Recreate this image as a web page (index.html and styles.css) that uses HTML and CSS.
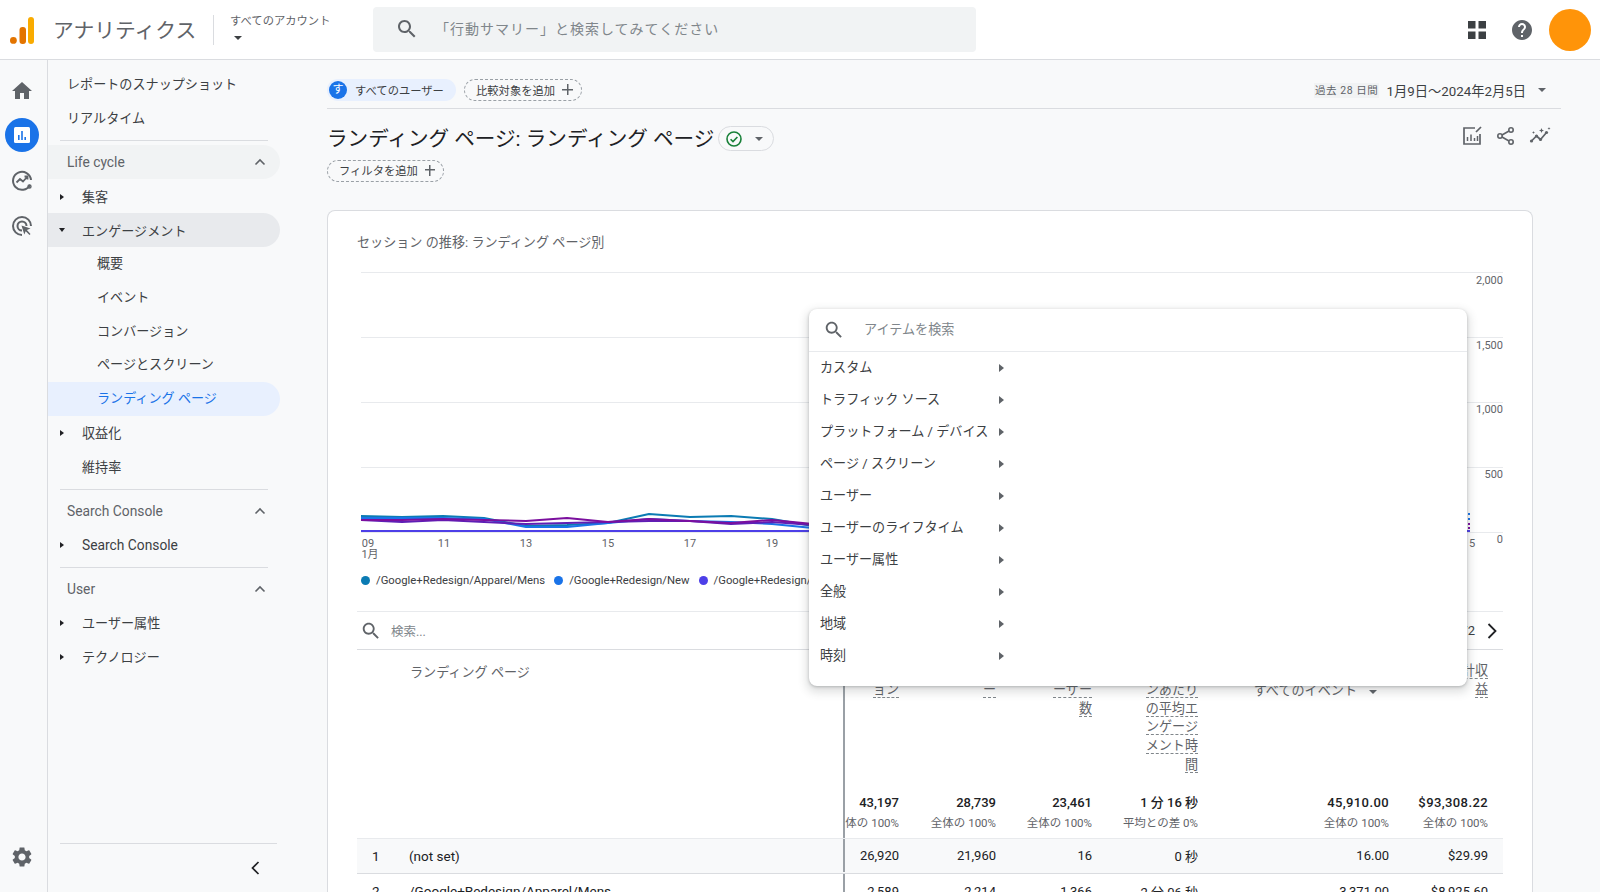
FILE: index.html
```html
<!DOCTYPE html>
<html lang="ja">
<head>
<meta charset="utf-8">
<title>アナリティクス</title>
<link rel="stylesheet" href="styles.css">
</head>
<body>
<header class="topbar">
  <svg class="ga-logo" width="24" height="28" viewBox="0 0 24 28"><circle cx="3.4" cy="23.4" r="3.4" fill="#e37400"/><rect x="9.5" y="10" width="6.5" height="17" rx="3" fill="#e37400"/><rect x="18" y="0" width="6" height="27" rx="3" fill="#f9ab00"/></svg>
  <div class="product">アナリティクス</div>
  <div class="account">
    <div class="account-label">すべてのアカウント</div>
    <span class="caret account-caret"></span>
  </div>
  <div class="searchbox">
    <svg class="icon-search" width="24" height="24" viewBox="0 0 24 24"><path d="M15.5 14h-.79l-.28-.27C15.41 12.59 16 11.11 16 9.5 16 5.91 13.09 3 9.5 3S3 5.91 3 9.5 5.91 16 9.5 16c1.61 0 3.09-.59 4.23-1.57l.27.28v.79l5 4.99L20.49 19l-4.99-5zm-6 0C7.01 14 5 11.99 5 9.5S7.01 5 9.5 5 14 7.01 14 9.5 11.99 14 9.5 14z"/></svg>
    <span class="searchbox-text">「行動サマリー」と検索してみてください</span>
  </div>
  <div class="top-actions">
    <svg width="18" height="18" viewBox="0 0 18 18" fill="#3c4043"><rect width="7.5" height="7.5"/><rect x="10.5" width="7.5" height="7.5"/><rect y="10.5" width="7.5" height="7.5"/><rect x="10.5" y="10.5" width="7.5" height="7.5"/></svg>
    <svg class="help" width="24" height="24" viewBox="0 0 24 24" fill="#5f6368"><path d="M12 2C6.48 2 2 6.48 2 12s4.48 10 10 10 10-4.48 10-10S17.52 2 12 2zm1 17h-2v-2h2v2zm2.07-7.75l-.9.92C13.45 12.9 13 13.5 13 15h-2v-.5c0-1.1.45-2.1 1.17-2.83l1.24-1.26c.37-.36.59-.86.59-1.41 0-1.1-.9-2-2-2s-2 .9-2 2H8c0-2.21 1.79-4 4-4s4 1.79 4 4c0 .88-.36 1.68-.93 2.25z"/></svg>
    <div class="avatar"></div>
  </div>
</header>

<div class="shell">
  <nav class="rail">
    <div class="rail-item"><svg width="24" height="24" viewBox="0 0 24 24" fill="#5f6368"><path d="M10 20v-6h4v6h5v-8h3L12 3 2 12h3v8z"/></svg></div>
    <div class="rail-item rail-active"><svg width="18" height="18" viewBox="0 0 18 18"><rect x="1" y="1" width="16" height="16" rx="1.5" fill="#fff"/><rect x="5" y="9" width="1.6" height="5" fill="#1a73e8"/><rect x="8.2" y="5" width="1.6" height="9" fill="#1a73e8"/><rect x="11.4" y="11" width="1.6" height="3" fill="#1a73e8"/></svg></div>
    <div class="rail-item"><svg width="24" height="24" viewBox="0 0 24 24" fill="none" stroke="#5f6368" stroke-width="2"><path d="M20 17A9 9 0 1 1 21 12"/><path d="M6.5 14.5l3.5-3.5 3 2.5 4.5-5M14.5 8.5h3v3" stroke-width="1.8"/><circle cx="19.5" cy="18.5" r="1.5" stroke-width="1.4"/></svg></div>
    <div class="rail-item"><svg width="24" height="24" viewBox="0 0 24 24" fill="none" stroke="#5f6368" stroke-width="2"><path d="M12 21a9 9 0 1 1 9-9"/><path d="M12 16.5A4.5 4.5 0 1 1 16.5 12"/><path d="M11.5 11.5l9 3-3.6 1.6 3.6 3.9-1 1-3.8-3.8-1.4 3.2z" fill="#5f6368" stroke="none"/></svg></div>
    <div class="rail-item rail-gear"><svg width="24" height="24" viewBox="0 0 24 24" fill="#5f6368"><path d="M19.14 12.94c.04-.3.06-.61.06-.94 0-.32-.02-.64-.07-.94l2.03-1.58c.18-.14.23-.41.12-.61l-1.92-3.32c-.12-.22-.37-.29-.59-.22l-2.39.96c-.5-.38-1.03-.7-1.62-.94l-.36-2.54c-.04-.24-.24-.41-.48-.41h-3.84c-.24 0-.43.17-.47.41l-.36 2.54c-.59.24-1.13.57-1.62.94l-2.39-.96c-.22-.08-.47 0-.59.22L2.74 8.87c-.12.21-.08.47.12.61l2.03 1.58c-.05.3-.09.63-.09.94s.02.64.07.94l-2.03 1.58c-.18.14-.23.41-.12.61l1.92 3.32c.12.22.37.29.59.22l2.39-.96c.5.38 1.03.7 1.62.94l.36 2.54c.05.24.24.41.48.41h3.84c.24 0 .44-.17.47-.41l.36-2.54c.59-.24 1.13-.56 1.62-.94l2.39.96c.22.08.47 0 .59-.22l1.92-3.32c.12-.22.07-.47-.12-.61l-2.01-1.58zM12 15.6c-1.98 0-3.6-1.62-3.6-3.6s1.62-3.6 3.6-3.6 3.6 1.62 3.6 3.6-1.62 3.6-3.6 3.6z"/></svg></div>
  </nav>

  <aside class="sidebar">
    <div class="nav-top">レポートのスナップショット</div>
    <div class="nav-top">リアルタイム</div>
    <div class="nav-rule"></div>
    <div class="nav-group nav-group-on">Life cycle<svg class="chev" width="12" height="8" viewBox="0 0 12 8" fill="none" stroke="#5f6368" stroke-width="1.6"><path d="M1.5 6.5L6 2l4.5 4.5"/></svg></div>
    <div class="nav-item"><span class="tri-right"></span>集客</div>
    <div class="nav-item nav-item-open"><span class="tri-down"></span>エンゲージメント</div>
    <div class="nav-sub">概要</div>
    <div class="nav-sub">イベント</div>
    <div class="nav-sub">コンバージョン</div>
    <div class="nav-sub">ページとスクリーン</div>
    <div class="nav-sub nav-sub-active">ランディング ページ</div>
    <div class="nav-item"><span class="tri-right"></span>収益化</div>
    <div class="nav-item nav-plain">維持率</div>
    <div class="nav-rule nav-rule-b"></div>
    <div class="nav-group">Search Console<svg class="chev" width="12" height="8" viewBox="0 0 12 8" fill="none" stroke="#5f6368" stroke-width="1.6"><path d="M1.5 6.5L6 2l4.5 4.5"/></svg></div>
    <div class="nav-item"><span class="tri-right"></span><span class="nav-latin">Search Console</span></div>
    <div class="nav-rule nav-rule-c"></div>
    <div class="nav-group">User<svg class="chev" width="12" height="8" viewBox="0 0 12 8" fill="none" stroke="#5f6368" stroke-width="1.6"><path d="M1.5 6.5L6 2l4.5 4.5"/></svg></div>
    <div class="nav-item"><span class="tri-right"></span>ユーザー属性</div>
    <div class="nav-item"><span class="tri-right"></span>テクノロジー</div>
    <div class="nav-foot">
      <svg width="12" height="16" viewBox="0 0 12 16" fill="none" stroke="#202124" stroke-width="1.7"><path d="M9.5 2L3.5 8l6 6"/></svg>
    </div>
  </aside>

  <main class="main">
    <div class="filterbar">
      <div class="chip-user"><span class="chip-badge">す</span>すべてのユーザー</div>
      <div class="chip-dash">比較対象を追加<span class="plus"></span></div>
      <div class="daterange">
        <span class="date-tag">過去 28 日間</span>
        <span class="date-text">1月9日～2024年2月5日</span>
        <span class="caret"></span>
      </div>
    </div>
    <div class="titlebar">
      <h1 class="page-title">ランディング ページ: ランディング ページ</h1>
      <div class="status-chip">
        <svg width="18" height="18" viewBox="0 0 18 18" fill="none" stroke="#188038" stroke-width="1.6"><circle cx="9" cy="9" r="7"/><path d="M5.6 9.2l2.4 2.4 4.4-4.6"/></svg>
        <span class="caret"></span>
      </div>
      <div class="title-tools">
        <svg width="22" height="22" viewBox="0 0 22 22" fill="none" stroke="#5f6368" stroke-width="1.7"><path d="M14 3H3v16h16V9"/><path d="M6.5 16v-4M10 16V9.5M13.5 16v-3M16.5 16v-5" stroke-width="1.5"/><path d="M15 7l5-5" stroke-width="1.7"/></svg>
        <svg width="20" height="20" viewBox="0 0 20 20" fill="none" stroke="#5f6368" stroke-width="1.6"><circle cx="15" cy="4" r="2.2"/><circle cx="15" cy="16" r="2.2"/><circle cx="4" cy="10" r="2.2"/><path d="M6 9l7-4M6 11l7 4"/></svg>
        <svg width="22" height="20" viewBox="0 0 22 20" fill="#5f6368"><path d="M2.5 15l5-5 4 3.5 6-7" fill="none" stroke="#5f6368" stroke-width="1.7"/><circle cx="2.5" cy="15" r="1.6"/><circle cx="7.5" cy="10" r="1.6"/><circle cx="11.5" cy="13.5" r="1.6"/><circle cx="17.5" cy="6.5" r="1.6"/><path d="M12.5 2l.7 1.8 1.8.7-1.8.7-.7 1.8-.7-1.8-1.8-.7 1.8-.7zM4.5 5l.4 1.1 1.1.4-1.1.4-.4 1.1-.4-1.1-1.1-.4 1.1-.4zM20 1l.4 1.1 1.1.4-1.1.4-.4 1.1-.4-1.1-1.1-.4 1.1-.4z"/></svg>
      </div>
    </div>
    <div class="chip-dash chip-filter">フィルタを追加<span class="plus"></span></div>

    <section class="card">
      <div class="chart-title">セッション の推移: ランディング ページ別</div>
      <svg class="chart" width="1146" height="304" viewBox="357 262 1146 304">
        <g stroke="#e8eaed" stroke-width="1"><path d="M361 272.500H1503M361 337.500H1503M361 402.500H1503M361 467.500H1503M361 532.500H1503"/></g>
        <g fill="none" stroke-width="2" stroke-linejoin="round">
          <polyline stroke="#0b7bb3" points="361,516 402,517 443,516 484,518 526,526 567,525 608,523 649,514 690,517 731,516 772,519 813,526"/>
          <polyline stroke="#1a73e8" points="361,518 402,518 443,518 484,519 526,527 567,527 608,523 649,519 690,521 731,522 772,524 813,528"/>
          <polyline stroke="#5f1fb5" points="361,520 402,522 443,520 484,522 526,524 567,523 608,522 649,521 690,521 731,524 772,522 813,525"/>
          <polyline stroke="#7b0f9e" points="361,520 402,520 443,519 484,520 526,521 567,518 608,522 649,519 690,521 731,523 772,520 813,524"/>
          <polyline stroke="#4d3fe8" points="361,531 1470,531"/>
          <path d="M1469 513v2M1469 518v2" stroke="#1a73e8"/>
          <path d="M1469 523v2M1469 527v2" stroke="#7b0f9e"/>
        </g>
        <g class="axis-y" text-anchor="end">
          <text x="1503" y="284">2,000</text>
          <text x="1503" y="349">1,500</text>
          <text x="1503" y="413">1,000</text>
          <text x="1503" y="478">500</text>
          <text x="1503" y="543">0</text>
        </g>
        <g class="axis-x" text-anchor="middle">
          <text x="368" y="547">09</text>
          <text x="370" y="558">1月</text>
          <text x="444" y="547">11</text>
          <text x="526" y="547">13</text>
          <text x="608" y="547">15</text>
          <text x="690" y="547">17</text>
          <text x="772" y="547">19</text>
          <text x="1472" y="547">5</text>
        </g>
      </svg>
      <div class="legend">
        <span class="legend-item"><i class="dot dot-a"></i>/Google+Redesign/Apparel/Mens</span>
        <span class="legend-item"><i class="dot dot-b"></i>/Google+Redesign/New</span>
        <span class="legend-item"><i class="dot dot-c"></i>/Google+Redesign/Apparel/Mens/Tees</span>
      </div>
      <div class="table-search">
        <svg width="22" height="22" viewBox="0 0 24 24" fill="#5f6368"><path d="M15.5 14h-.79l-.28-.27C15.41 12.59 16 11.11 16 9.5 16 5.91 13.09 3 9.5 3S3 5.91 3 9.5 5.91 16 9.5 16c1.61 0 3.09-.59 4.23-1.57l.27.28v.79l5 4.99L20.49 19l-4.99-5zm-6 0C7.01 14 5 11.99 5 9.5S7.01 5 9.5 5 14 7.01 14 9.5 11.99 14 9.5 14z"/></svg>
        <span class="table-search-text">検索...</span>
        <span class="pager">
          <span>1/2</span>
          <svg width="12" height="18" viewBox="0 0 12 18" fill="none" stroke="#202124" stroke-width="1.8"><path d="M2.500 2l7 7-7 7"/></svg>
        </span>
      </div>

      <div class="trow thead">
        <div class="cell-dim head-dim">ランディング ページ</div>
        <div class="cell-num"><span class="dash">セッシ<br>ョン</span></div>
        <div class="cell-num"><span class="dash">ユーザ<br>ー</span></div>
        <div class="cell-num"><span class="dash">新しいユ<br>ーザー<br>数</span></div>
        <div class="cell-num"><span class="dash">セッショ<br>ンあたり<br>の平均エ<br>ンゲージ<br>メント時<br>間</span></div>
        <div class="cell-num">イベント数<br><span class="event-pick">すべてのイベント<span class="caret event-caret"></span></span></div>
        <div class="cell-num"><span class="dash">合計収<br>益</span></div>
      </div>
      <div class="trow totals">
        <div class="cell-dim"></div>
        <div class="cell-total"><b>43,197</b><small>全体の 100%</small></div>
        <div class="cell-total"><b>28,739</b><small>全体の 100%</small></div>
        <div class="cell-total"><b>23,461</b><small>全体の 100%</small></div>
        <div class="cell-total"><b>1 分 16 秒</b><small>平均との差 0%</small></div>
        <div class="cell-total"><b class="wide">45,910.00</b><small>全体の 100%</small></div>
        <div class="cell-total"><b class="wide">$93,308.22</b><small>全体の 100%</small></div>
      </div>
      <div class="trow data data-odd">
        <div class="cell-dim cell-row"><span class="rank">1</span>(not set)</div>
        <div class="cell-val">26,920</div>
        <div class="cell-val">21,960</div>
        <div class="cell-val">16</div>
        <div class="cell-val">0 秒</div>
        <div class="cell-val">16.00</div>
        <div class="cell-val">$29.99</div>
      </div>
      <div class="trow data">
        <div class="cell-dim cell-row"><span class="rank">2</span>/Google+Redesign/Apparel/Mens</div>
        <div class="cell-val">2,589</div>
        <div class="cell-val">2,214</div>
        <div class="cell-val">1,366</div>
        <div class="cell-val">2 分 06 秒</div>
        <div class="cell-val">3,371.00</div>
        <div class="cell-val">$8,925.60</div>
      </div>
    </section>
  </main>
</div>

<div class="dim-menu">
  <div class="menu-search">
    <svg width="22" height="22" viewBox="0 0 24 24" fill="#5f6368"><path d="M15.5 14h-.79l-.28-.27C15.41 12.59 16 11.11 16 9.5 16 5.91 13.09 3 9.5 3S3 5.91 3 9.5 5.91 16 9.5 16c1.61 0 3.09-.59 4.23-1.57l.27.28v.79l5 4.99L20.49 19l-4.99-5zm-6 0C7.01 14 5 11.99 5 9.5S7.01 5 9.5 5 14 7.01 14 9.5 11.99 14 9.5 14z"/></svg>
    <span>アイテムを検索</span>
  </div>
  <ul class="menu-list">
    <li>カスタム</li>
    <li>トラフィック ソース</li>
    <li>プラットフォーム / デバイス</li>
    <li>ページ / スクリーン</li>
    <li>ユーザー</li>
    <li>ユーザーのライフタイム</li>
    <li>ユーザー属性</li>
    <li>全般</li>
    <li>地域</li>
    <li>時刻</li>
  </ul>
</div>
</body>
</html>
```

FILE: styles.css
```css
* { box-sizing: border-box; }
html, body { height: 892px; }
body {
  margin: 0;
  overflow: hidden;
  background: #f8f9fa;
  color: #3c4043;
  font-family: Roboto, "Noto Sans CJK JP", sans-serif;
  font-size: 13.100px;
  position: relative;
}

.caret {
  display: inline-block;
  width: 0; height: 0;
  border-left: 4px solid transparent;
  border-right: 4px solid transparent;
  border-top: 4px solid #5f6368;
}

/* top bar */
.topbar {
  height: 60px;
  background: #fff;
  border-bottom: 1px solid #dadce0;
  display: flex;
  align-items: center;
}
.ga-logo { margin: 2px 0 0 10px; flex: none; }
.product {
  margin-left: 19px;
  width: 161px;
  height: 30px;
  line-height: 32px;
  font-size: 20.800px;
  color: #5f6368;
  border-right: 1px solid #dadce0;
  white-space: nowrap;
}
.account { width: 159px; padding-left: 16px; flex: none; }
.account-label { font-size: 11.300px; line-height: 16px; color: #5f6368; margin-top: -6px; white-space: nowrap; }
.account-caret { display: block; margin: 6px 0 0 4px; border-top-color: #3c4043; }
.searchbox {
  width: 603px;
  height: 45px;
  background: #f1f3f4;
  border-radius: 4px;
  display: flex;
  align-items: center;
  padding-left: 22px;
  margin-top: -1px;
  flex: none;
}
.icon-search { fill: #5f6368; flex: none; }
.searchbox-text { margin: -2px 0 0 16px; font-size: 14px; letter-spacing: 1px; color: #80868b; white-space: nowrap; text-spacing-trim: space-all; }
.top-actions { margin-left: auto; display: flex; align-items: center; padding-right: 9px; }
.help { margin-left: 24px; }
.avatar { margin-left: 15px; width: 42px; height: 42px; border-radius: 50%; background: #ff9409; }

/* shell */
.shell { display: flex; height: 832px; }
.rail {
  width: 48px;
  flex: none;
  border-right: 1px solid #dadce0;
  display: flex;
  flex-direction: column;
  align-items: center;
  padding: 8px 4px 0 0;
}
.rail-item {
  width: 34px;
  height: 34px;
  margin-bottom: 11px;
  display: flex;
  align-items: center;
  justify-content: center;
  border-radius: 50%;
  flex: none;
}
.rail-item:first-child { margin: 6px 0 10px; }
.rail-item:nth-child(3) { margin-bottom: 12px; }
.rail-active { background: #1a73e8; }
.rail-gear { margin-top: auto; margin-bottom: 18px; }

/* sidebar */
.sidebar {
  width: 232px;
  flex: none;
  display: flex;
  flex-direction: column;
  padding-top: 8px;
}
.nav-top {
  height: 33.750px;
  line-height: 33.750px;
  padding-left: 19px;
  color: #3c4043;
}
.nav-rule { height: 1px; background: #dadce0; margin: 4px 12px 4.400px 12px; flex: none; }
.nav-rule-b { margin: 5.750px 12px 4px; }
.nav-rule-c { margin: 5px 12px 4px; }
.nav-group {
  height: 34px;
  padding: 0 14px 0 19px;
  display: flex;
  align-items: center;
  justify-content: space-between;
  color: #5f6368;
  font-size: 13.800px;
  border-radius: 0 17px 17px 0;
  flex: none;
}
.nav-group-on { background: #f1f3f4; margin-bottom: .750px; }
.nav-item {
  height: 33.750px;
  display: flex;
  align-items: center;
  padding-left: 12px;
  color: #3c4043;
  flex: none;
  border-radius: 0 17px 17px 0;
}
.nav-item-open { background: #e8eaed; }
.nav-plain { padding-left: 34px; }
.nav-latin { font-size: 13.800px; }
.tri-right {
  width: 0; height: 0;
  border-top: 3.500px solid transparent;
  border-bottom: 3.500px solid transparent;
  border-left: 4px solid #202124;
  margin-right: 18px;
  flex: none;
}
.tri-down {
  width: 0; height: 0;
  border-left: 3.500px solid transparent;
  border-right: 3.500px solid transparent;
  border-top: 4px solid #202124;
  margin: 0 17px 0 -1px;
  flex: none;
}
.nav-sub {
  height: 33.750px;
  line-height: 33.750px;
  padding-left: 49px;
  color: #3c4043;
  flex: none;
  border-radius: 0 17px 17px 0;
}
.nav-sub-active { background: #e8f0fe; color: #1a73e8; }
.nav-foot {
  margin: auto 3px 0 12px;
  height: 49px;
  border-top: 1px solid #dadce0;
  display: flex;
  justify-content: flex-end;
  align-items: center;
  padding: 0 16px 0 0;
  flex: none;
}

/* main */
.main { flex: 1; min-width: 0; padding: 19px 39px 0 47px; overflow: hidden; }
.filterbar {
  height: 30px;
  border-bottom: 1px solid #dadce0;
  display: flex;
  align-items: flex-start;
  gap: 8px;
}
.chip-user {
  height: 22px;
  width: 129px;
  background: #e8f0fe;
  border-radius: 11px;
  display: flex;
  align-items: center;
  font-size: 11.300px;
  color: #3c4043;
  padding: 0 0 1px 2px;
  white-space: nowrap;
}
.chip-badge {
  width: 18px; height: 18px;
  margin-right: 8px;
  border-radius: 50%;
  background: #1a73e8;
  color: #fff;
  font-size: 11px;
  line-height: 18px;
  text-align: center;
  flex: none;
}
.chip-dash {
  height: 22px;
  border: 1px dashed #9aa0a6;
  border-radius: 11px;
  display: inline-flex;
  align-items: center;
  padding: 0 8px 1px 11px;
  font-size: 11.300px;
  color: #3c4043;
  white-space: nowrap;
}
.plus {
  position: relative;
  display: inline-block;
  width: 11px; height: 11px;
  margin-left: 7px;
  background: linear-gradient(#5f6368, #5f6368) center / 100% 1.500px no-repeat,
              linear-gradient(#5f6368, #5f6368) center / 1.500px 100% no-repeat;
}
.daterange { margin-left: auto; display: flex; align-items: center; height: 22px; padding-right: 15px; }
.date-tag { background: #f1f3f4; font-size: 10.500px; letter-spacing: .55px; line-height: 15px; padding: 0 1px; color: #5f6368; white-space: nowrap; }
.date-text { margin: 0 12px 0 7px; font-size: 13.300px; color: #3c4043; white-space: nowrap; }

.titlebar {
  display: flex;
  align-items: center;
  height: 51px;
  padding-top: 7px;
  margin-right: 10px;
}
.page-title { margin: -3px 0 0; font-size: 20.600px; font-weight: 400; color: #202124; white-space: nowrap; }
.status-chip {
  margin: 1px 0 0 4px;
  width: 56px; height: 25px;
  border: 1px solid #dadce0;
  border-radius: 13px;
  display: flex;
  align-items: center;
  gap: 12px;
  padding-left: 6px;
}
.title-tools { margin: -4px 0 0 auto; display: flex; align-items: center; gap: 13px; }
.chip-filter { display: flex; width: 117px; padding-bottom: 2px; }

.card {
  margin: 28px 0 0 0;
  height: 690px;
  background: #fff;
  border: 1px solid #dadce0;
  border-bottom: 0;
  border-radius: 8px 8px 0 0;
  padding: 0 29px;
  width: 1206px;
}
.chart-title { height: 51px; padding-top: 22px; line-height: 19px; color: #5f6368; }
.chart { display: block; overflow: visible; }
.axis-y text, .axis-x text { font-size: 11px; fill: #5f6368; font-family: Roboto, "Noto Sans CJK JP", sans-serif; }
.legend {
  height: 46px;
  display: flex;
  padding: 5px 0 0 4px;
  gap: 9px;
  border-bottom: 1px solid #e8eaed;
  white-space: nowrap;
  overflow: hidden;
}
.legend-item { display: flex; align-items: center; height: 18px; font-size: 11.300px; color: #3c4043; }
.dot { width: 9px; height: 9px; border-radius: 50%; margin-right: 6px; flex: none; }
.dot-a { background: #0b7bb3; }
.dot-b { background: #1a73e8; }
.dot-c { background: #4d3fe8; }

.table-search {
  height: 38px;
  display: flex;
  align-items: center;
  padding-left: 3px;
  border-bottom: 1px solid #dadce0;
}
.table-search-text { margin-left: 9px; font-size: 12.500px; color: #80868b; }
.pager { margin-left: auto; display: flex; align-items: center; gap: 11px; padding-right: 5px; font-size: 13px; }

.trow {
  display: grid;
  grid-template-columns: 488px 54px 97px 96px 106px 191px 99px 15px;
}
.cell-dim { border-right: 2px solid #9aa0a6; }
.thead { height: 140px; }
.head-dim { padding: 13px 0 0 53px; line-height: 19px; color: #5f6368; }
.cell-num {
  padding-top: 12px;
  line-height: 18.800px;
  color: #5f6368;
  text-align: right;
  white-space: nowrap;
  overflow: hidden;
}
.dash { border-bottom: 1px dashed #80868b; }
.event-pick { padding-right: 20px; position: relative; display: inline-block; margin: 1px 12px 0 0; }
.event-caret { position: absolute; right: 0; top: 8px; }

.totals { height: 49px; border-bottom: 1px solid #e8eaed; }
.cell-total { display: flex; flex-direction: column; align-items: flex-end; overflow: hidden; white-space: nowrap; }
.cell-total b { font-weight: 500; font-size: 13px; line-height: 18px; margin-top: 4px; color: #202124; }
.cell-total .wide { letter-spacing: .4px; }
.cell-total small { font-size: 11.500px; line-height: 18px; margin-top: 2px; color: #5f6368; }

.data { height: 35px; border-bottom: 1px solid #dadce0; align-items: stretch; }
.data-odd { background: #f8f9fa; padding-bottom: 1px; }
.cell-row { display: flex; align-items: center; color: #202124; font-size: 13.500px; }
.rank { width: 52px; padding-left: 15px; flex: none; }
.cell-val { display: flex; align-items: center; justify-content: flex-end; font-size: 13px; color: #202124; white-space: nowrap; }

/* dimension menu */
.dim-menu {
  position: absolute;
  left: 809px;
  top: 309px;
  width: 658px;
  height: 377px;
  background: #fff;
  border-radius: 8px;
  box-shadow: 0 1px 3px rgba(60,64,67,.3), 0 4px 8px 3px rgba(60,64,67,.15);
}
.menu-search {
  height: 43px;
  display: flex;
  align-items: center;
  padding: 0 0 4px 14px;
  border-bottom: 1px solid #e8eaed;
}
.menu-search svg { margin-top: 4px; }
.menu-search span { margin-left: 19px; color: #80868b; }
.menu-list { list-style: none; margin: 0; padding: 0; }
.menu-list li {
  position: relative;
  height: 32px;
  line-height: 32px;
  padding-left: 11px;
  color: #3c4043;
}
.menu-list li::after {
  content: "";
  position: absolute;
  left: 190px;
  top: 12px;
  width: 0; height: 0;
  border-top: 4px solid transparent;
  border-bottom: 4px solid transparent;
  border-left: 5px solid #5f6368;
}
```
